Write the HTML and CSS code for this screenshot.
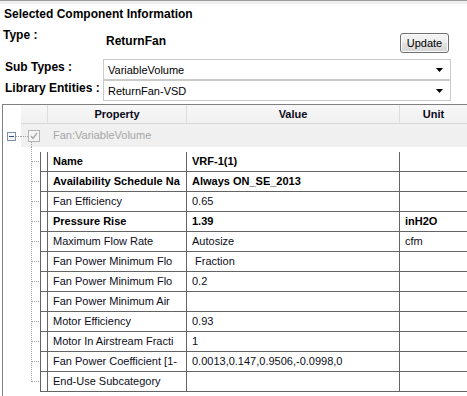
FILE: index.html
```html
<!DOCTYPE html>
<html>
<head>
<meta charset="utf-8">
<link rel="stylesheet" href="styles.css">
</head>
<body>
<div class="topbar"></div>
<h1 class="title">Selected Component Information</h1>
<div class="type-row">
  <div class="type-label">Type :</div>
  <div class="type-value">ReturnFan</div>
  <button class="btn">Update</button>
</div>
<div class="select-row">
  <div class="sel-label">Sub Types :</div>
  <div class="select"><span class="sel-text">VariableVolume</span><svg class="arrow" width="7" height="4" viewBox="0 0 7 4"><polygon points="0,0 7,0 3.5,4" fill="#000"/></svg></div>
</div>
<div class="select-row">
  <div class="sel-label">Library Entities :</div>
  <div class="select"><span class="sel-text">ReturnFan-VSD</span><svg class="arrow" width="7" height="4" viewBox="0 0 7 4"><polygon points="0,0 7,0 3.5,4" fill="#000"/></svg></div>
</div>
<div class="panel">
  <div class="hdr">
    <div class="hc"></div>
    <div class="hc">Property</div>
    <div class="hc">Value</div>
    <div class="hc last">Unit</div>
  </div>
  <div class="group">
    <div class="gutter">
      <svg class="expander" width="9" height="9" viewBox="0 0 9 9"><rect x="0.5" y="0.5" width="8" height="8" fill="#f6f7f9" stroke="#7d8ea6"/><line x1="2" y1="4.5" x2="7" y2="4.5" stroke="#284e86"/></svg>
      <span class="hdots"></span>
    </div>
    <div class="group-body">
      <span class="hdots short"></span>
      <svg class="check" width="12" height="12" viewBox="0 0 12 12"><rect x="0.5" y="0.5" width="11" height="11" fill="#f4f4f4" stroke="#b4b4b4"/><polyline points="3,6 5,8.5 9,3" fill="none" stroke="#a8a8a8" stroke-width="1.3"/></svg>
      <span class="group-text">Fan:VariableVolume</span>
    </div>
  </div>
  <div class="rows">
    <div class="row"><div class="tree"></div><div class="c narrow"></div><div class="c b">Name</div><div class="c b">VRF-1(1)</div><div class="c u"></div></div>
    <div class="row"><div class="tree"></div><div class="c narrow"></div><div class="c b">Availability Schedule Na</div><div class="c b">Always ON_SE_2013</div><div class="c u"></div></div>
    <div class="row"><div class="tree"></div><div class="c narrow"></div><div class="c">Fan Efficiency</div><div class="c">0.65</div><div class="c u"></div></div>
    <div class="row"><div class="tree"></div><div class="c narrow"></div><div class="c b">Pressure Rise</div><div class="c b">1.39</div><div class="c u b">inH2O</div></div>
    <div class="row"><div class="tree"></div><div class="c narrow"></div><div class="c">Maximum Flow Rate</div><div class="c">Autosize</div><div class="c u">cfm</div></div>
    <div class="row"><div class="tree"></div><div class="c narrow"></div><div class="c">Fan Power Minimum Flo</div><div class="c">&nbsp;Fraction</div><div class="c u"></div></div>
    <div class="row"><div class="tree"></div><div class="c narrow"></div><div class="c">Fan Power Minimum Flo</div><div class="c">0.2</div><div class="c u"></div></div>
    <div class="row"><div class="tree"></div><div class="c narrow"></div><div class="c">Fan Power Minimum Air</div><div class="c"></div><div class="c u"></div></div>
    <div class="row"><div class="tree"></div><div class="c narrow"></div><div class="c">Motor Efficiency</div><div class="c">0.93</div><div class="c u"></div></div>
    <div class="row"><div class="tree"></div><div class="c narrow"></div><div class="c">Motor In Airstream Fracti</div><div class="c">1</div><div class="c u"></div></div>
    <div class="row"><div class="tree"></div><div class="c narrow"></div><div class="c">Fan Power Coefficient [1-</div><div class="c">0.0013,0.147,0.9506,-0.0998,0</div><div class="c u"></div></div>
    <div class="row"><div class="tree"></div><div class="c narrow"></div><div class="c">End-Use Subcategory</div><div class="c"></div><div class="c u"></div></div>
  </div>
</div>
</body>
</html>
```

FILE: styles.css
```css
html, body {
  margin: 0;
  padding: 0;
}
body {
  width: 467px;
  height: 396px;
  overflow: hidden;
  background: #ffffff;
  font-family: "Liberation Sans", Arial, sans-serif;
  color: #000;
}
.topbar {
  height: 3px;
  border-top: 1px solid #9a9a9a;
  background: #f0f0f0;
}
.title {
  margin: 0;
  padding: 1px 0 0 4px;
  font-size: 12px;
  font-weight: bold;
  line-height: 18px;
  height: 18px;
}
.type-row {
  display: flex;
  height: 34px;
}
.type-label {
  flex: 0 0 103px;
  box-sizing: border-box;
  padding-left: 3px;
  margin-top: 4px;
  font-size: 12px;
  font-weight: bold;
  line-height: 16px;
}
.type-value {
  padding-left: 3px;
  margin-top: 10px;
  font-size: 12px;
  font-weight: bold;
  line-height: 16px;
}
.btn {
  margin: 10px 18px 0 auto;
  width: 49px;
  height: 20px;
  padding: 0;
  border: 1px solid #707070;
  border-radius: 3px;
  background: linear-gradient(#f4f4f4 0%, #ededed 50%, #e2e2e2 51%, #d6d6d6 100%);
  box-shadow: inset 0 0 0 1px #fcfcfc;
  font-family: "Liberation Sans", Arial, sans-serif;
  font-size: 11px;
  color: #000;
  line-height: 18px;
}
.select-row {
  display: flex;
  height: 21px;
}
.type-row + .select-row {
  margin-top: 2px;
}
.sel-label {
  flex: 0 0 103px;
  box-sizing: border-box;
  padding-left: 5px;
  font-size: 12px;
  font-weight: bold;
  line-height: 16px;
}
.select {
  width: 348px;
  height: 21px;
  box-sizing: border-box;
  border: 1px solid #cacaca;
  background: #fff;
  display: flex;
  align-items: center;
  padding: 0 7px 0 4px;
  font-size: 11px;
}
.sel-text {
  flex: 1;
}
.arrow {
  display: block;
  margin-top: 1px;
}
.panel {
  margin: 3px 0 0 2px;
  height: 300px;
  border-top: 1px solid #808080;
  border-left: 1px solid #808080;
}
.hdr {
  margin-left: 18px;
  display: grid;
  grid-template-columns: 27px 139px 213px 1fr;
  height: 19px;
  box-sizing: border-box;
  border-bottom: 1px solid #d8d8d8;
  background: linear-gradient(#f7f7f7, #f0f0f0);
}
.hc {
  box-sizing: border-box;
  border-right: 1px solid #dedede;
  text-align: center;
  font-size: 11px;
  font-weight: bold;
  line-height: 18px;
  color: #0a0a1a;
}
.hc.last {
  border-right: none;
}
.group {
  display: flex;
  height: 23px;
}
.gutter {
  flex: 0 0 18px;
  display: flex;
  align-items: flex-start;
  padding: 8px 0 0 4px;
  box-sizing: border-box;
}
.expander {
  display: block;
  flex: none;
}
.hdots {
  display: block;
  flex: 1;
  height: 1px;
  margin-top: 4px;
  background: repeating-linear-gradient(to right, #a0a0a0 0 1px, transparent 1px 2px);
}
.group-body {
  flex: 1;
  display: flex;
  align-items: flex-start;
  background-color: #f0f0f0;
  background-image: repeating-linear-gradient(to bottom, #a0a0a0 0 1px, transparent 1px 2px);
  background-size: 1px 5px;
  background-position: 10px 18px;
  background-repeat: no-repeat;
}
.hdots.short {
  flex: 0 0 7px;
  margin-top: 12px;
}
.check {
  display: block;
  margin-top: 6px;
}
.group-text {
  margin-left: 13px;
  font-size: 11px;
  line-height: 23px;
  color: #a6a6a6;
}
.rows {
  padding-top: 5px;
  background-image: repeating-linear-gradient(to bottom, #a0a0a0 0 1px, transparent 1px 2px);
  background-size: 1px calc(100% - 10px);
  background-position: 28px 0;
  background-repeat: no-repeat;
}
.row {
  display: grid;
  grid-template-columns: 37px 8px 139px 213px 1fr;
  height: 20px;
}
.tree {
  background-image: repeating-linear-gradient(to right, #a0a0a0 0 1px, transparent 1px 2px);
  background-size: 8px 1px;
  background-position: 29px 9px;
  background-repeat: no-repeat;
}
.c {
  box-sizing: border-box;
  border-right: 1px solid #646464;
  border-bottom: 1px solid #646464;
  padding-left: 5px;
  font-size: 11px;
  line-height: 19px;
  white-space: nowrap;
  overflow: hidden;
  color: #0d0d1a;
}
.c.narrow {
  border-left: 1px solid #646464;
  padding: 0;
}
.c.u {
  border-right: none;
}
.c.b {
  font-weight: bold;
  color: #000;
}
```
